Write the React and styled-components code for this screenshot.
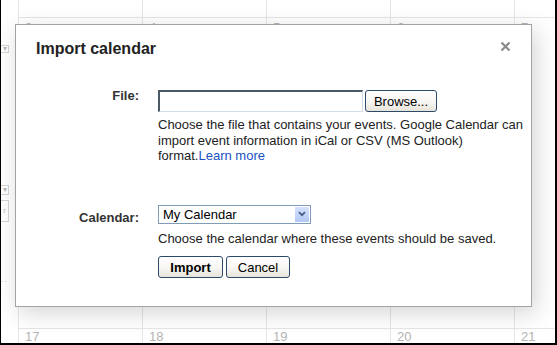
import React from 'react';
import styled, { createGlobalStyle } from 'styled-components';

const GlobalStyle = createGlobalStyle`
  html, body { margin: 0; padding: 0; background: #fff; }
  body { font-family: "Liberation Sans", Arial, sans-serif; }
`;

const Frame = styled.div`
  position: relative;
  width: 557px;
  height: 345px;
  box-sizing: border-box;
  border-left: 1px solid #000;
  border-right: 2px solid #000;
  border-bottom: 2px solid #000;
  overflow: hidden;
  background: #fff;
`;

const CalendarGrid = styled.div`
  display: grid;
  grid-template-columns: 17px repeat(4, 124px) 1fr;
  grid-template-rows: 17px 311px 1fr;
  height: 100%;
`;

const Sidebar = styled.div`
  grid-row: 1 / -1;
  grid-column: 1;
  display: flex;
  flex-direction: column;
  align-items: flex-start;
`;

const SideBox = styled.div`
  margin-top: ${(p) => p.$gap}px;
  width: 8px;
  height: ${(p) => p.$h}px;
  box-sizing: border-box;
  border: 1px solid #d4d4d4;
  border-left: none;
  color: #b8b8b8;
  font-size: 8px;
  line-height: ${(p) => p.$h - 2}px;
  text-align: center;
  overflow: hidden;
`;

const SideDots = styled.div`
  margin-top: 52px;
  color: #c8c8c8;
  font-size: 9px;
  letter-spacing: 1px;
`;

const DayCell = styled.div`
  border-left: 1px solid #e6e6e6;
  border-top: ${(p) => (p.$top ? '1px solid #e6e6e6' : 'none')};
  padding: ${(p) => p.$padTop || 0}px 6px 0;
  color: #b4b4b4;
  font-size: 13px;
  line-height: 12px;
  overflow: hidden;
`;

const Dialog = styled.div`
  position: absolute;
  left: 14px;
  top: 24px;
  width: 517px;
  box-sizing: border-box;
  background: #fff;
  border: 1px solid #a3a3a3;
  box-shadow: 4px 6px 22px rgba(0, 0, 0, 0.17);
  padding: 15px 20px 28px 20px;
  color: #222;
`;

const Header = styled.div`
  display: flex;
  justify-content: space-between;
  align-items: flex-start;
`;

const Title = styled.h2`
  margin: 0;
  font-size: 16px;
  line-height: 18px;
  font-weight: bold;
  color: #222;
`;

const CloseButton = styled.button`
  margin-top: 1px;
  padding: 0;
  border: none;
  background: none;
  width: 11px;
  height: 11px;
  display: flex;
  cursor: pointer;
`;

const Form = styled.div`
  margin-top: 32px;
  display: flex;
  flex-direction: column;
`;

const FieldRow = styled.div`
  display: grid;
  grid-template-columns: 103px 1fr;
  column-gap: 19px;
  margin-top: ${(p) => p.$gap || 0}px;
`;

const Label = styled.label`
  margin-top: ${(p) => p.$offset}px;
  text-align: right;
  font-size: 13px;
  line-height: 15px;
  font-weight: bold;
  color: #333;
`;

const FieldBody = styled.div`
  display: flex;
  flex-direction: column;
  align-items: flex-start;
`;

const Controls = styled.div`
  display: flex;
  gap: 2px;
`;

const FileInput = styled.div`
  width: 205px;
  height: 22px;
  box-sizing: border-box;
  border-top: 2px solid #4b5967;
  border-left: 2px solid #4b5967;
  border-bottom: 1px solid #d3dde7;
  border-right: 1px solid #d3dde7;
  background: #fff;
`;

const Button = styled.button`
  width: ${(p) => p.$w}px;
  height: 22px;
  box-sizing: border-box;
  padding: 0;
  border: 1px solid #2e4a6b;
  border-radius: 3px;
  background: linear-gradient(#ffffff 0%, #f7f6f2 55%, #e6e3da 100%);
  font-family: "Liberation Sans", Arial, sans-serif;
  font-size: 13px;
  font-weight: ${(p) => (p.$primary ? 'bold' : 'normal')};
  color: #000;
  cursor: pointer;
`;

const Description = styled.p`
  margin: ${(p) => p.$gap}px 0 0;
  width: 375px;
  font-size: 13px;
  line-height: 15.5px;
  color: #222;
`;

const Link = styled.a`
  color: #2152c4;
  text-decoration: none;
`;

const SelectBox = styled.div`
  width: 153px;
  height: 19px;
  box-sizing: border-box;
  border: 1px solid #7f9db9;
  display: flex;
  align-items: center;
  justify-content: space-between;
  background: #fff;
`;

const SelectText = styled.span`
  padding-left: 4px;
  font-size: 13px;
  color: #000;
`;

const ArrowBox = styled.span`
  width: 16px;
  height: 17px;
  box-sizing: border-box;
  border: 1px solid #fff;
  background: linear-gradient(#d6e2fd, #b3c8f6);
  display: flex;
  align-items: center;
  justify-content: center;
`;

const ButtonRow = styled.div`
  display: flex;
  gap: 3px;
  margin-top: 10px;
`;

export default function App() {
  return (
    <>
      <GlobalStyle />
      <Frame>
        <CalendarGrid>
          <Sidebar>
            <SideBox $gap={45} $h={8}>▾</SideBox>
            <SideBox $gap={132} $h={10}>▾</SideBox>
            <SideBox $gap={5} $h={22}>r</SideBox>
            <SideDots>..</SideDots>
          </Sidebar>
          {[0, 1, 2, 3, 4].map((i) => (
            <DayCell key={`h${i}`} />
          ))}
          {['3', '4', '5', '6', '7'].map((d) => (
            <DayCell key={`m${d}`} $top $padTop={4}>
              {d}
            </DayCell>
          ))}
          {['17', '18', '19', '20', '21'].map((d) => (
            <DayCell key={`b${d}`} $top $padTop={2}>
              {d}
            </DayCell>
          ))}
        </CalendarGrid>

        <Dialog role="dialog" aria-label="Import calendar">
          <Header>
            <Title>Import calendar</Title>
            <CloseButton aria-label="Close">
              <svg width="11" height="11" viewBox="0 0 11 11">
                <path d="M1.5 1.5 L9.5 9.5 M9.5 1.5 L1.5 9.5" stroke="#8a8a8a" strokeWidth="2.2" fill="none" />
              </svg>
            </CloseButton>
          </Header>

          <Form>
            <FieldRow>
              <Label $offset={-2}>File:</Label>
              <FieldBody>
                <Controls>
                  <FileInput />
                  <Button $w={72}>Browse...</Button>
                </Controls>
                <Description $gap={5}>
                  Choose the file that contains your events. Google Calendar can import event
                  information in iCal or CSV (MS Outlook) format.<Link href="#">Learn more</Link>
                </Description>
              </FieldBody>
            </FieldRow>

            <FieldRow $gap={41}>
              <Label $offset={5}>Calendar:</Label>
              <FieldBody>
                <SelectBox>
                  <SelectText>My Calendar</SelectText>
                  <ArrowBox>
                    <svg width="8" height="6" viewBox="0 0 8 6">
                      <path d="M1 1.2 L4 4.2 L7 1.2" stroke="#4a5f86" strokeWidth="1.8" fill="none" />
                    </svg>
                  </ArrowBox>
                </SelectBox>
                <Description $gap={7}>Choose the calendar where these events should be saved.</Description>
                <ButtonRow>
                  <Button $w={65} $primary>
                    Import
                  </Button>
                  <Button $w={64}>Cancel</Button>
                </ButtonRow>
              </FieldBody>
            </FieldRow>
          </Form>
        </Dialog>
      </Frame>
    </>
  );
}
